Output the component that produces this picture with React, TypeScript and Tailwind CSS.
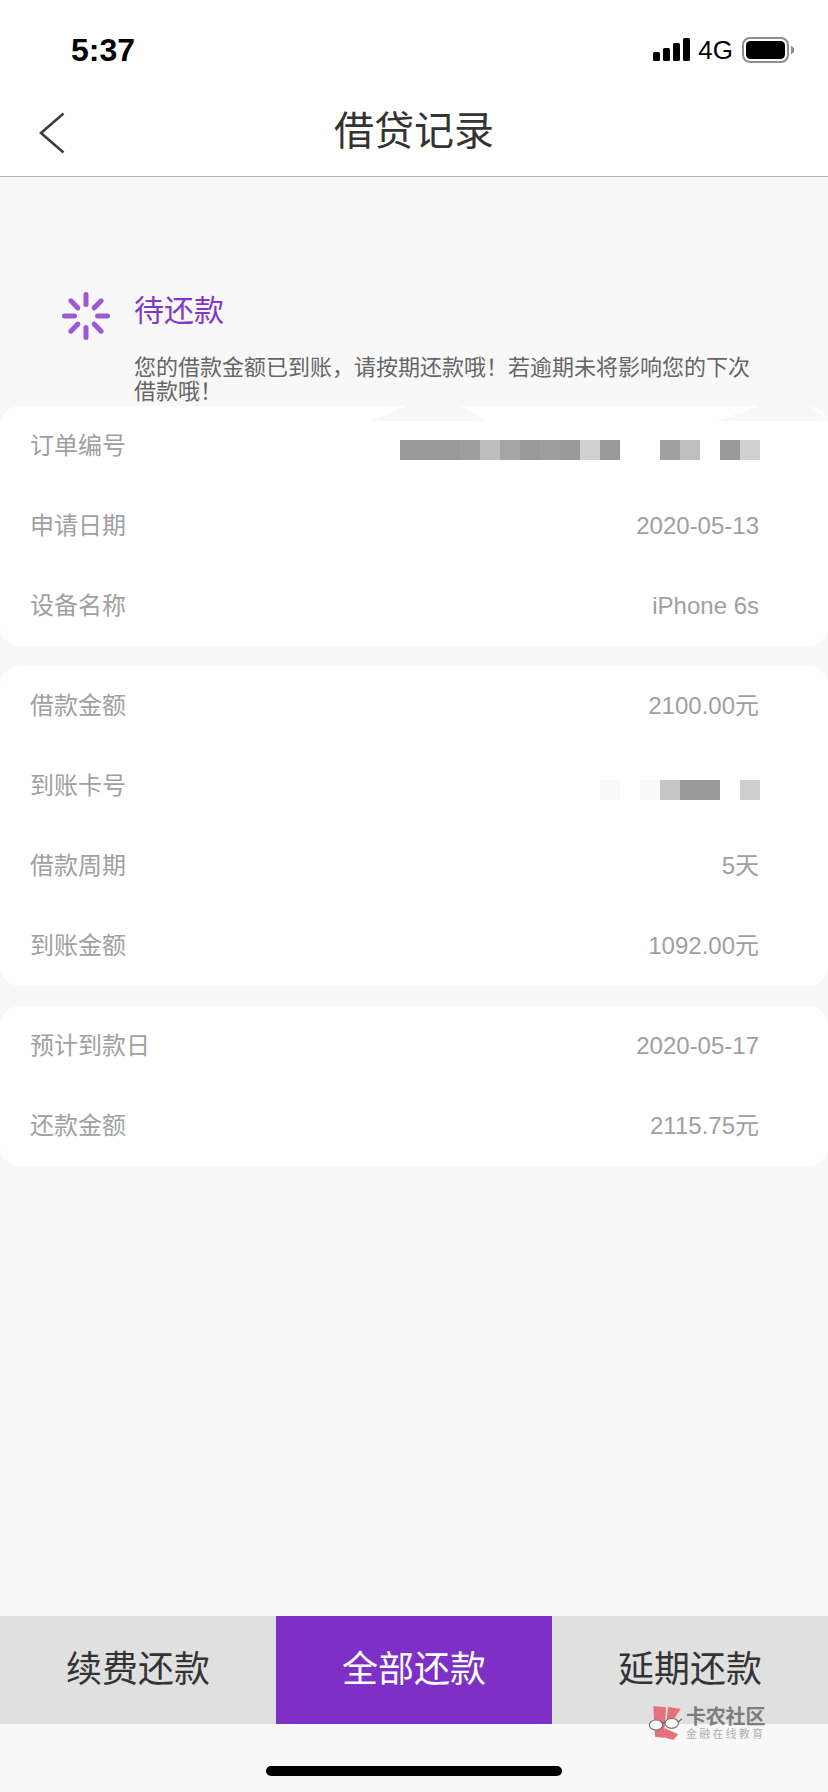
const CJK = "font-['Liberation_Sans','Noto_Sans_CJK_SC',sans-serif]";

type Cell = { w: string; c: string };

// mosaic blocks covering the order number / card number
const ORDER_CELLS: Cell[] = [
  { w: "w-[60px]", c: "bg-[#999999]" },
  { w: "w-[20px]", c: "bg-[#9e9e9e]" },
  { w: "w-[20px]", c: "bg-[#bebebe]" },
  { w: "w-[20px]", c: "bg-[#a5a5a5]" },
  { w: "w-[20px]", c: "bg-[#999999]" },
  { w: "w-[20px]", c: "bg-[#9e9e9e]" },
  { w: "w-[20px]", c: "bg-[#999999]" },
  { w: "w-[20px]", c: "bg-[#d0d0d0]" },
  { w: "w-[20px]", c: "bg-[#999999]" },
  { w: "w-[40px]", c: "bg-white" },
  { w: "w-[20px]", c: "bg-[#a0a0a0]" },
  { w: "w-[20px]", c: "bg-[#bfbfbf]" },
  { w: "w-[20px]", c: "bg-white" },
  { w: "w-[20px]", c: "bg-[#999999]" },
  { w: "w-[20px]", c: "bg-[#d0d0d0]" },
];

const CARD_CELLS: Cell[] = [
  { w: "w-[20px]", c: "bg-[#fafafa]" },
  { w: "w-[20px]", c: "bg-white" },
  { w: "w-[20px]", c: "bg-[#fafafa]" },
  { w: "w-[20px]", c: "bg-[#c6c6c6]" },
  { w: "w-[40px]", c: "bg-[#999999]" },
  { w: "w-[20px]", c: "bg-white" },
  { w: "w-[20px]", c: "bg-[#cecece]" },
];

function Mosaic({ cells }: { cells: Cell[] }) {
  return (
    <div className="mr-[-1px] mt-[8px] flex h-[20px]">
      {cells.map((cell, i) => (
        <div key={i} className={`h-full ${cell.w} ${cell.c}`} />
      ))}
    </div>
  );
}

function Row({ label, value, cells }: { label: string; value?: string; cells?: Cell[] }) {
  return (
    <div className="flex h-[80px] items-center justify-between pl-[30px] pr-[69px]">
      <span className="text-[24px] leading-none text-[#a0a0a0]">{label}</span>
      {cells ? (
        <Mosaic cells={cells} />
      ) : (
        <span className="text-[24px] leading-none text-[#a0a0a0]">{value}</span>
      )}
    </div>
  );
}

function Card({ children }: { children: React.ReactNode }) {
  return <div className="relative rounded-[20px] bg-white">{children}</div>;
}

function Spinner() {
  const angles = [0, 45, 90, 135, 180, 225, 270, 315];
  return (
    <svg width="48" height="48" viewBox="0 0 48 48" className="shrink-0">
      {angles.map((a) => (
        <rect
          key={a}
          x="21.5"
          y="0"
          width="5"
          height="15"
          rx="2.5"
          fill="#9c59d6"
          transform={`rotate(${a} 24 24)`}
        />
      ))}
    </svg>
  );
}

function StatusIcons() {
  return (
    <div className="flex items-center">
      <svg width="37" height="24" viewBox="0 0 37 24" className="mr-[8px]">
        <rect x="0" y="14" width="7" height="9" rx="1.5" fill="#000" />
        <rect x="10" y="10" width="7" height="13" rx="1.5" fill="#000" />
        <rect x="20" y="5" width="7" height="18" rx="1.5" fill="#000" />
        <rect x="30" y="0" width="7" height="23" rx="1.5" fill="#000" />
      </svg>
      <span className="mr-[9px] text-[26px] leading-none text-black">4G</span>
      <svg width="52" height="26" viewBox="0 0 52 26">
        <rect x="1" y="1" width="45" height="24" rx="7" fill="none" stroke="#8e8e8e" strokeWidth="2" />
        <rect x="4" y="4" width="39" height="18" rx="4.5" fill="#000" />
        <path d="M49 8.5 L52 11 V15 L49 17.5 Z" fill="#8e8e8e" />
      </svg>
    </div>
  );
}

function Watermark() {
  return (
    <div className="absolute left-[648px] top-[1704px] flex">
      <svg width="36" height="38" viewBox="0 0 36 38">
        <path d="M5.3 2 L18 3.3 L16 33.7 L7 32.7 Z" fill="#e8707c" />
        <path d="M20.3 2.7 L32.7 5 L25.3 16 L18.7 15 Z" fill="#e8707c" />
        <path d="M17 24.3 L30.3 30.3 L25.3 36 L14.3 32.7 Z" fill="#e8707c" />
        <ellipse cx="8" cy="21" rx="6.7" ry="5" fill="#fff" stroke="#777" strokeWidth="1.2" />
        <ellipse cx="23.7" cy="19.3" rx="6.7" ry="5" fill="#fff" stroke="#777" strokeWidth="1.2" />
        <path d="M14 19.5 L18 18 M30 18 L34 15" fill="none" stroke="#666" strokeWidth="1.2" />
      </svg>
      <div className="ml-[2px] flex flex-col">
        <span className="mt-[3px] text-[20px] font-bold leading-[20px] tracking-[-0.2px] text-[#7c7c7c]">卡农社区</span>
        <span className="mt-[1px] text-[11px] leading-[12px] tracking-[2.2px] text-[#b0b0b0]">金融在线教育</span>
      </div>
    </div>
  );
}

export default function App() {
  return (
    <div className={`relative flex h-[1792px] w-[828px] flex-col overflow-hidden bg-[#f8f8f8] ${CJK}`}>
      <header className="bg-white">
        <div className="flex h-[88px] items-center justify-between pl-[71px] pr-[34px] pt-[11px]">
          <span className="text-[32px] font-bold leading-none text-black">5:37</span>
          <StatusIcons />
        </div>
        <div className="relative flex h-[89px] items-center justify-center border-b border-[#b4b4b4] pb-[2px]">
          <svg width="26" height="42" viewBox="0 0 26 42" className="absolute left-[39px] top-[24px]" fill="none">
            <path d="M24.5 1.5 L2 21 L24.5 40.5" stroke="#3d3d3d" strokeWidth="2.6" />
          </svg>
          <h1 className="text-[40px] font-normal leading-none text-[#333333]">借贷记录</h1>
        </div>
      </header>

      <section className="flex h-[229px] pl-[62px] pr-[70px] pt-[115px]">
        <Spinner />
        <div className="ml-[24px]">
          <p className="mt-[1px] text-[30px] leading-[36px] text-[#8238c4]">待还款</p>
          <p className="mt-[27px] text-[22px] leading-[24px] text-[#666666]">
            您的借款金额已到账，请按期还款哦！若逾期未将影响您的下次借款哦！
          </p>
        </div>
      </section>

      <main className="flex flex-col gap-[20px]">
        <Card>
          <svg className="absolute left-0 top-0" width="828" height="15" viewBox="0 0 828 15">
            <path d="M370 15 L407 0 H460 L487 15 Z" fill="#f8f8f8" />
            <path d="M717 15 L760 0 H810 L828 15 Z" fill="#f8f8f8" />
          </svg>
          <div className="relative">
            <Row label="订单编号" cells={ORDER_CELLS} />
            <Row label="申请日期" value="2020-05-13" />
            <Row label="设备名称" value="iPhone 6s" />
          </div>
        </Card>
        <Card>
          <Row label="借款金额" value="2100.00元" />
          <Row label="到账卡号" cells={CARD_CELLS} />
          <Row label="借款周期" value="5天" />
          <Row label="到账金额" value="1092.00元" />
        </Card>
        <Card>
          <Row label="预计到款日" value="2020-05-17" />
          <Row label="还款金额" value="2115.75元" />
        </Card>
      </main>

      <div className="mt-[450px] flex h-[108px] text-[36px]">
        <button className="flex w-[276px] items-center justify-center bg-[#e0e0e0] text-[#333333]">续费还款</button>
        <button className="flex w-[276px] items-center justify-center bg-[#7e2fc6] text-white">全部还款</button>
        <button className="flex w-[276px] items-center justify-center bg-[#e0e0e0] text-[#333333]">延期还款</button>
      </div>

      <div className="flex justify-center pt-[42px]">
        <div className="h-[10px] w-[296px] rounded-full bg-black" />
      </div>

      <Watermark />
    </div>
  );
}
